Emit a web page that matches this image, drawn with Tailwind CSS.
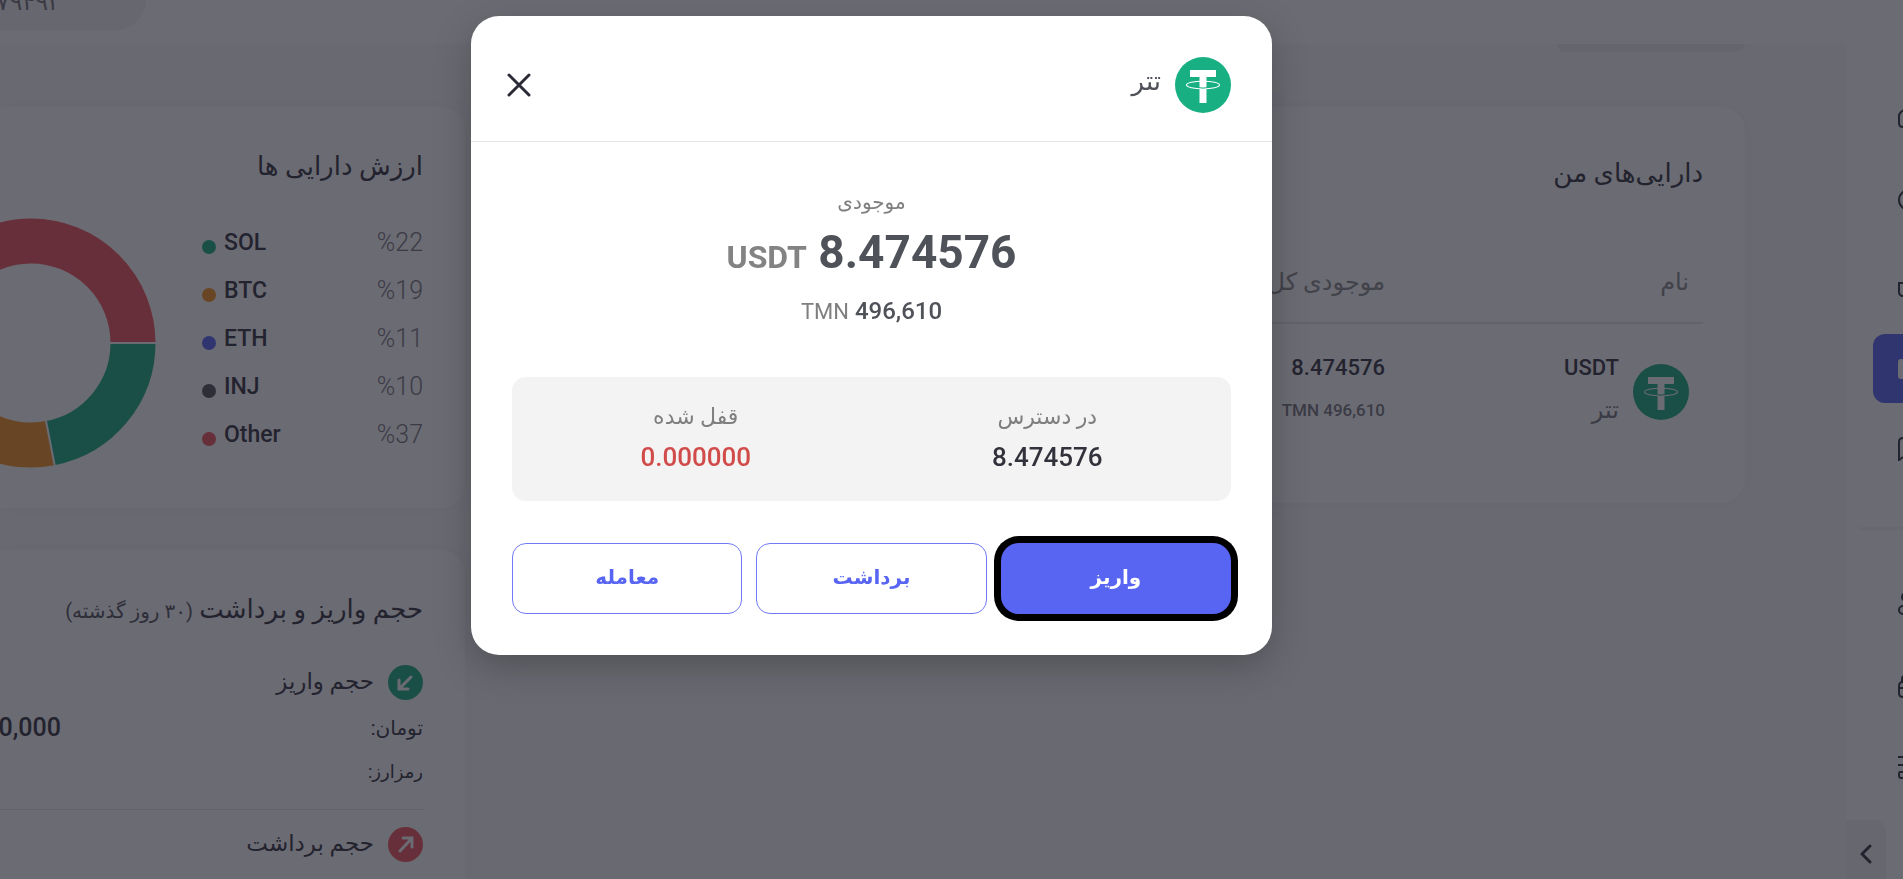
<!DOCTYPE html>
<html lang="fa" dir="rtl">
<head>
    <meta charset="UTF-8">
    <meta name="viewport" content="width=device-width, initial-scale=1.0">
    <title>دارایی‌های من</title>
    <script src="https://cdn.jsdelivr.net/npm/@tailwindcss/browser@4"></script>
</head>
<body class="h-screen overflow-hidden bg-[#fafafc] text-[#32323c] font-[Roboto,'DejaVu_Sans',sans-serif]">
    <!-- Shared icons -->
    <svg class="hidden">
        <symbol id="tether" viewBox="0 0 56 56">
            <circle cx="28" cy="28" r="28" fill="#18b083" />
            <path d="M15 13h26v7H15z" fill="#fff" />
            <path d="M24.500 13h7v33h-7z" fill="#fff" />
            <ellipse cx="28" cy="28" rx="16.500" ry="3.800" fill="none" stroke="#fff" stroke-width="1.100" />
            <path d="M24 30.700q4 .8 8 0" fill="none" stroke="#18b083" stroke-width="1" />
        </symbol>
    </svg>

    <div class="flex h-full flex-col overflow-hidden">
        <!-- Header -->
        <header class="flex h-11 shrink-0 justify-end bg-white">
            <div class="flex h-[30px] w-[146px] justify-end rounded-br-[36px] bg-[#f3f3f3]">
                <span class="-mt-3 w-[61px] text-right text-[24px] leading-7 text-[#77777c]">۷۹۴۹۲</span>
            </div>
        </header>

        <div class="flex min-h-0 grow overflow-hidden">
            <!-- Sidebar -->
            <aside class="flex w-[57px] shrink-0 flex-col overflow-hidden bg-white pt-[41px]" dir="ltr">
                <nav class="flex flex-col gap-[14px] pl-[27px]">
                    <a href="#" aria-label="خانه" class="flex h-[69px] items-center pb-[6px] pl-6">
                        <svg class="size-6 shrink-0" fill="none" stroke="currentColor" stroke-width="2" viewBox="0 0 24 24"><path d="M12 1L4 7q-2 2-2 4v7q0 4 4 4h12q4 0 4-4v-7q0-2-2-4z" /></svg>
                    </a>
                    <a href="#" aria-label="بازار" class="flex h-[69px] items-center pb-[6px] pl-6">
                        <svg class="size-6 shrink-0" fill="none" stroke="currentColor" stroke-width="2" viewBox="0 0 24 24"><circle cx="12" cy="12" r="10" /></svg>
                    </a>
                    <a href="#" aria-label="معامله" class="flex h-[69px] items-center pl-6">
                        <svg class="size-6 shrink-0" fill="none" stroke="currentColor" stroke-width="2" viewBox="0 0 24 24"><path d="M22 9H2v9q0 3 3 4h17" /></svg>
                    </a>
                    <a href="#" aria-label="کیف پول" class="flex h-[69px] items-center rounded-l-xl bg-[#5865f2] pl-6 text-white">
                        <svg class="size-6 shrink-0" fill="currentColor" viewBox="0 0 24 24"><rect x="1" y="2" width="24" height="20" rx="3" /></svg>
                    </a>
                    <a href="#" aria-label="سفارش‌ها" class="flex h-[69px] items-center pb-[6px] pl-6">
                        <svg class="size-6 shrink-0" fill="none" stroke="currentColor" stroke-width="2" viewBox="0 0 24 24"><path d="M22 1H6Q2 1 2 5v18l4-3M6 9h10" /></svg>
                    </a>
                </nav>
                <hr class="mt-[41px] mb-[39px] ml-[13px] border-t-[3px] border-[#f5f5f7]">
                <nav class="flex flex-col gap-[14px] pl-[27px]">
                    <a href="#" aria-label="دعوت دوستان" class="flex h-[69px] items-center pl-6">
                        <svg class="size-6 shrink-0" fill="none" stroke="currentColor" stroke-width="2" viewBox="0 0 24 24"><circle cx="9" cy="5" r="4" /><circle cx="6" cy="18" r="4" /></svg>
                    </a>
                    <a href="#" aria-label="امنیت" class="flex h-[69px] items-center pl-6">
                        <svg class="size-6 shrink-0" fill="none" stroke="currentColor" stroke-width="2" viewBox="0 0 24 24"><path d="M5 7V4q0-3 3-3M2 13h20M22 7H6Q2 7 2 11v7q0 4 4 4h16" /></svg>
                    </a>
                    <a href="#" aria-label="تنظیمات" class="flex h-[69px] items-center pb-[6px] pl-6">
                        <svg class="size-6 shrink-0" fill="none" stroke="currentColor" stroke-width="2" viewBox="0 0 24 24"><path d="M1 2h21M1 10h21M22 17H3q-1 0-1 2v1q0 3 2 3h18" /></svg>
                    </a>
                </nav>
                <button type="button" aria-label="بستن منو" class="mt-4 flex min-h-0 w-10 grow items-center justify-center rounded-tr-xl bg-[#f3f3f3] pt-2">
                    <svg class="h-5 w-3" fill="none" stroke="currentColor" stroke-width="3" viewBox="0 0 12 20"><path stroke-linecap="round" stroke-linejoin="round" d="M10 2L2 10l8 8" /></svg>
                </button>
            </aside>

            <!-- Main Content -->
            <main class="flex min-w-0 grow gap-7 overflow-hidden pr-[101px]">
                <section class="min-w-0 grow">
                    <div class="h-2 w-[188px] rounded-b-lg bg-[#ededed]"></div>
                    <div class="mt-[55px] h-[396px] rounded-3xl bg-white px-[42px] pt-11 shadow-[0_0_24px_rgb(0_0_0/0.04)]">
                        <h2 class="text-[26px] leading-11">دارایی‌های من</h2>
                        <table class="mt-[73px] w-full">
                            <thead class="border-b-2 border-[#e6e6e6] text-[24px] leading-7 text-[#8a8a8a]">
                                <tr>
                                    <th class="w-[318px] pr-[14px] pb-[26px] text-right font-normal">نام</th>
                                    <th class="pb-[26px] text-right font-normal">موجودی کل</th>
                                </tr>
                            </thead>
                            <tbody>
                                <tr>
                                    <td class="pt-[22px] pr-[14px]">
                                        <div class="flex items-center gap-[14px]">
                                            <svg class="mt-2 size-14"><use href="#tether" /></svg>
                                            <div>
                                                <p class="text-[22px] leading-11 font-medium">USDT</p>
                                                <p class="text-[24px] leading-10 text-[#77777c]">تتر</p>
                                            </div>
                                        </div>
                                    </td>
                                    <td class="pt-[22px]">
                                        <p class="text-[22px] leading-11 font-medium">8.474576</p>
                                        <p class="text-right text-[17px] leading-10 font-medium text-[#77777c]" dir="ltr">TMN 496,610</p>
                                    </td>
                                </tr>
                            </tbody>
                        </table>
                    </div>
                </section>

                <div class="w-[465px] shrink-0 pt-[63px]">
                    <section class="h-[401px] rounded-r-3xl bg-white pt-[37px] pr-[42px] shadow-[0_0_24px_rgb(0_0_0/0.04)]">
                        <h2 class="text-[26px] leading-11">ارزش دارایی ها</h2>
                        <div class="mt-[30px] flex">
                            <ul class="w-[221px] pt-px text-[23px] leading-12">
                                <li class="flex justify-between"><span class="text-[25px] font-light text-[#77777c]" dir="ltr">%22</span><span class="flex items-center gap-2 font-medium" dir="ltr"><i class="mt-2 size-[14px] rounded-full bg-[#18b083]"></i>SOL</span></li>
                                <li class="flex justify-between"><span class="text-[25px] font-light text-[#77777c]" dir="ltr">%19</span><span class="flex items-center gap-2 font-medium" dir="ltr"><i class="mt-2 size-[14px] rounded-full bg-[#f79420]"></i>BTC</span></li>
                                <li class="flex justify-between"><span class="text-[25px] font-light text-[#77777c]" dir="ltr">%11</span><span class="flex items-center gap-2 font-medium" dir="ltr"><i class="mt-2 size-[14px] rounded-full bg-[#5865f2]"></i>ETH</span></li>
                                <li class="flex justify-between"><span class="text-[25px] font-light text-[#77777c]" dir="ltr">%10</span><span class="flex items-center gap-2 font-medium" dir="ltr"><i class="mt-2 size-[14px] rounded-full bg-[#50525a]"></i>INJ</span></li>
                                <li class="flex justify-between"><span class="text-[25px] font-light text-[#77777c]" dir="ltr">%37</span><span class="flex items-center gap-2 font-medium" dir="ltr"><i class="mt-2 size-[14px] rounded-full bg-[#f2555a]"></i>Other</span></li>
                            </ul>
                            <!-- Donut -->
                            <svg class="mr-[46px] h-[250px] w-[156px] shrink-0" viewBox="94 0 156 250">
                                <g fill="none" stroke-width="45">
                                    <circle cx="125" cy="125" r="102" stroke="#18b083" pathLength="100" stroke-dasharray="22 78" />
                                    <circle cx="125" cy="125" r="102" stroke="#f79420" pathLength="100" stroke-dasharray="19 81" stroke-dashoffset="-22" />
                                    <circle cx="125" cy="125" r="102" stroke="#5865f2" pathLength="100" stroke-dasharray="11 89" stroke-dashoffset="-41" />
                                    <circle cx="125" cy="125" r="102" stroke="#50525a" pathLength="100" stroke-dasharray="10 90" stroke-dashoffset="-52" />
                                    <circle cx="125" cy="125" r="102" stroke="#f2555a" pathLength="100" stroke-dasharray="38 62" stroke-dashoffset="-62" />
                                </g>
                                <path d="M204 125h46M140 203l9 46" stroke="#fff" stroke-width="2" />
                            </svg>
                        </div>
                    </section>

                    <section class="mt-[42px] h-[401px] rounded-r-3xl bg-white pt-[37px] pr-[42px] shadow-[0_0_24px_rgb(0_0_0/0.04)]">
                        <h2 class="text-[26px] leading-11 whitespace-nowrap">حجم واریز و برداشت <small class="text-[20px] text-[#50525a]">(۳۰ روز گذشته)</small></h2>
                        <div class="mt-[31px] flex items-center gap-[14px]">
                            <svg class="size-[35px]" viewBox="0 0 35 35"><circle cx="17.500" cy="17.500" r="17.500" fill="#18b083" /><path d="M23 12L11 24M11 15v9h9" fill="none" stroke="#fff" stroke-width="3" stroke-linecap="round" /></svg>
                            <h3 class="text-[23px] leading-9">حجم واریز</h3>
                        </div>
                        <div class="mt-[6px] flex h-11 items-center justify-between">
                            <span class="text-[20px]">تومان:</span>
                            <span class="w-[61px] text-[25px] font-medium">0,000</span>
                        </div>
                        <p class="text-[18px] leading-11">رمزارز:</p>
                        <hr class="mt-[15px] border-[#e6e6e6]">
                        <div class="mt-4 flex items-center gap-[14px]">
                            <svg class="size-[35px]" viewBox="0 0 35 35"><circle cx="17.500" cy="17.500" r="17.500" fill="#f2555a" /><path d="M12 24L24 11M15 11h9v9" fill="none" stroke="#fff" stroke-width="3" stroke-linecap="round" /></svg>
                            <h3 class="text-[23px] leading-9">حجم برداشت</h3>
                        </div>
                    </section>
                </div>
            </main>
        </div>
    </div>

    <!-- Modal -->
    <div class="fixed inset-0 z-40 flex items-start justify-center bg-[#1b1b28]/65 pt-4 pr-[160px]">
        <div role="dialog" aria-modal="true" class="w-[801px] rounded-[28px] bg-white shadow-[0_12px_36px_rgb(0_0_0/0.25)]">
            <div class="flex h-[126px] items-center border-b border-[#e6e6e6] pt-3 pr-[41px] pl-9">
                <svg class="size-14"><use href="#tether" /></svg>
                <h2 class="mr-[14px] pb-2 text-[26px] leading-9 text-[#50525a]">تتر</h2>
                <button type="button" aria-label="بستن" class="mr-auto size-6">
                    <svg class="size-6" fill="none" stroke="#2b2b38" stroke-width="3" viewBox="0 0 24 24"><path stroke-linecap="round" d="M2 2l20 20M22 2L2 22" /></svg>
                </button>
            </div>
            <div class="px-[41px] pt-10 pb-[41px] text-center">
                <p class="text-[20px] leading-10 text-[#7f7f7f]">موجودی</p>
                <p class="text-[46px] leading-15 font-bold text-[#50525a]" dir="ltr"><span class="text-[32px] text-[#838383]">USDT</span> 8.474576</p>
                <p class="text-[24px] leading-12 font-medium text-[#50525a]" dir="ltr"><span class="text-[22px] font-normal text-[#7f7f7f]">TMN</span> 496,610</p>
                <div class="mt-[41px] flex h-[124px] rounded-[14px] bg-[#f3f3f3] px-2 pt-5">
                    <div class="flex-1">
                        <p class="text-[22px] leading-10 text-[#7f7f7f]">در دسترس</p>
                        <p class="text-[26px] leading-10 font-medium">8.474576</p>
                    </div>
                    <div class="flex-1">
                        <p class="text-[22px] leading-10 text-[#7f7f7f]">قفل شده</p>
                        <p class="text-[26px] leading-10 font-medium text-[#d24b4b]">0.000000</p>
                    </div>
                </div>
                <div class="mt-[42px] grid h-[71px] grid-cols-3 gap-[14px] text-[20px] font-bold text-[#5865f2]">
                    <button type="button" class="rounded-[18px] bg-[#5865f2] pb-1 text-white ring-7 ring-black">واریز</button>
                    <button type="button" class="rounded-[14px] border border-[#6f7af4] pb-1">برداشت</button>
                    <button type="button" class="rounded-[14px] border border-[#6f7af4] pb-1">معامله</button>
                </div>
            </div>
        </div>
    </div>
</body>
</html>
